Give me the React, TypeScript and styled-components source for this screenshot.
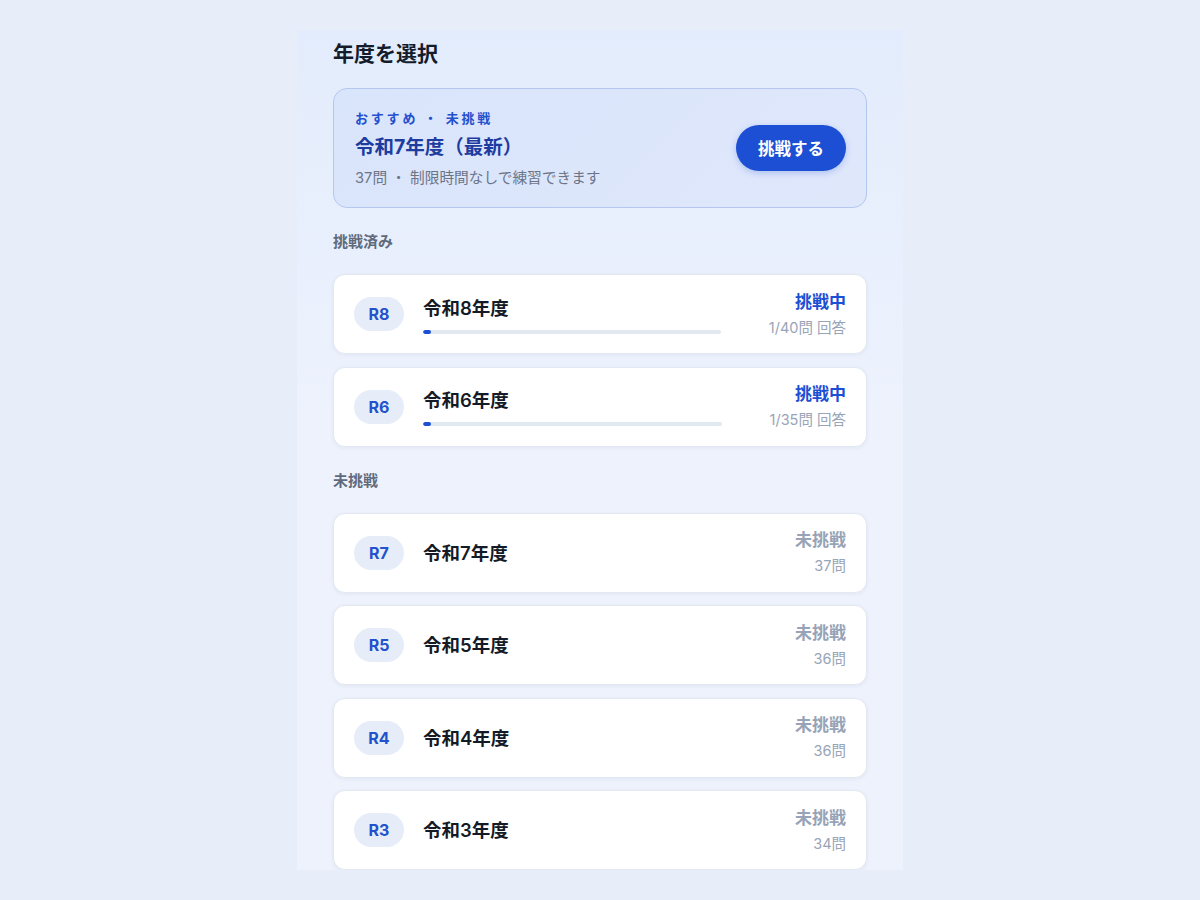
import styled, { createGlobalStyle } from "styled-components";

const GlobalStyle = createGlobalStyle`
  html, body {
    margin: 0;
    padding: 0;
    background: #e8eef9;
    font-family: "Inter", "Noto Sans CJK JP", sans-serif;
  }
  * { box-sizing: border-box; }
`;

// Start Styled Components
const Page = styled.div`
  min-height: 900px;
  padding-top: 30px;
  display: flex;
  justify-content: center;
`;

const Panel = styled.div`
  width: 606px;
  height: 840px;
  overflow: hidden;
  padding: 9px 36px 0;
  background: linear-gradient(180deg, #e3ecfc 0%, #edf2fd 45%, #edf2fc 100%);
`;

const Title = styled.h1`
  margin: 0;
  font-size: 21px;
  line-height: 29px;
  font-weight: 700;
  color: #141c2b;
`;

const Featured = styled.div`
  margin-top: 20px;
  height: 120px;
  border: 1.5px solid #b5c7ee;
  border-radius: 14px;
  background: linear-gradient(135deg, #d9e5fb 0%, #dfe7fb 100%);
  padding: 20px 20px 0 21px;
  display: flex;
  align-items: center;
  justify-content: space-between;
`;

const FeaturedText = styled.div`
  display: flex;
  flex-direction: column;
  align-self: flex-start;
`;

const Tag = styled.span`
  font-size: 13px;
  line-height: 18px;
  font-weight: 700;
  letter-spacing: 2.8px;
  color: #2450cf;
`;

const FeaturedName = styled.span`
  margin-top: 7px;
  font-size: 19.5px;
  line-height: 26px;
  font-weight: 700;
  color: #1e3c9f;
`;

const FeaturedSub = styled.span`
  margin-top: 8px;
  font-size: 14.7px;
  line-height: 20px;
  color: #6b7588;
`;

const StartButton = styled.button`
  width: 110px;
  height: 46px;
  margin-top: -20px;
  border: none;
  border-radius: 23px;
  background: #1c4fd3;
  color: #fff;
  font-family: inherit;
  font-size: 16.5px;
  font-weight: 700;
  box-shadow: 0 2px 6px rgba(28, 79, 211, 0.25);
`;

const SectionLabel = styled.h2`
  margin: 24px 0 22px;
  font-size: 15px;
  line-height: 20px;
  font-weight: 600;
  color: #5f6b7d;
`;

const List = styled.div`
  display: flex;
  flex-direction: column;
  gap: 12.5px;
`;

const Card = styled.div`
  height: 80px;
  background: #fff;
  border: 1px solid #e2e8f2;
  border-radius: 12px;
  box-shadow: 0 1px 4px rgba(30, 50, 90, 0.06);
  padding: 0 20px 0 20px;
  display: flex;
  align-items: center;
`;

const Badge = styled.span`
  width: 50px;
  height: 34px;
  border-radius: 17px;
  background: #e6edf9;
  color: #2352cc;
  font-size: 16px;
  font-weight: 700;
  display: flex;
  align-items: center;
  justify-content: center;
  flex-shrink: 0;
`;

const Info = styled.div`
  flex: 1;
  margin-left: 19px;
  display: flex;
  flex-direction: column;
`;

const YearName = styled.span`
  font-size: 18.5px;
  line-height: 26px;
  font-weight: 600;
  color: #141a26;
`;

const Track = styled.div`
  margin-top: 9px;
  height: 4px;
  border-radius: 2px;
  background: #e2e8f0;
  overflow: hidden;
`;

const Fill = styled.div`
  height: 100%;
  border-radius: 2px;
  background: #1c4fd3;
`;

const Status = styled.div`
  padding-left: 48px;
  display: flex;
  flex-direction: column;
  align-items: flex-end;
`;

const StatusText = styled.span<{ $active: boolean }>`
  font-size: 17px;
  line-height: 22px;
  font-weight: 700;
  color: ${(p) => (p.$active ? "#1c4fd3" : "#97a3b6")};
`;

const StatusSub = styled.span`
  margin-top: 5px;
  font-size: 14.5px;
  line-height: 20px;
  color: #98a4b7;
`;
// End Styled Components

type Year = {
  code: string;
  name: string;
  total: number;
  answered?: number;
};

const started: Year[] = [
  { code: "R8", name: "令和8年度", total: 40, answered: 1 },
  { code: "R6", name: "令和6年度", total: 35, answered: 1 },
];

const notStarted: Year[] = [
  { code: "R7", name: "令和7年度", total: 37 },
  { code: "R5", name: "令和5年度", total: 36 },
  { code: "R4", name: "令和4年度", total: 36 },
  { code: "R3", name: "令和3年度", total: 34 },
];

const YearCard = ({ year }: { year: Year }) => {
  const inProgress = year.answered !== undefined;
  return (
    <Card>
      <Badge>{year.code}</Badge>
      <Info>
        <YearName>{year.name}</YearName>
        {inProgress && (
          <Track>
            <Fill style={{ width: `${Math.max(8, ((year.answered || 0) / year.total) * 295)}px` }} />
          </Track>
        )}
      </Info>
      <Status>
        <StatusText $active={inProgress}>{inProgress ? "挑戦中" : "未挑戦"}</StatusText>
        <StatusSub>
          {inProgress ? `${year.answered}/${year.total}問 回答` : `${year.total}問`}
        </StatusSub>
      </Status>
    </Card>
  );
};

const App = () => {
  return (
    <>
      <GlobalStyle />
      <Page>
        <Panel>
          <Title>年度を選択</Title>
          <Featured>
            <FeaturedText>
              <Tag>おすすめ ・ 未挑戦</Tag>
              <FeaturedName>令和7年度（最新）</FeaturedName>
              <FeaturedSub>37問 ・ 制限時間なしで練習できます</FeaturedSub>
            </FeaturedText>
            <StartButton>挑戦する</StartButton>
          </Featured>

          <SectionLabel>挑戦済み</SectionLabel>
          <List>
            {started.map((y) => (
              <YearCard key={y.code} year={y} />
            ))}
          </List>

          <SectionLabel>未挑戦</SectionLabel>
          <List>
            {notStarted.map((y) => (
              <YearCard key={y.code} year={y} />
            ))}
          </List>
        </Panel>
      </Page>
    </>
  );
};

export default App;
